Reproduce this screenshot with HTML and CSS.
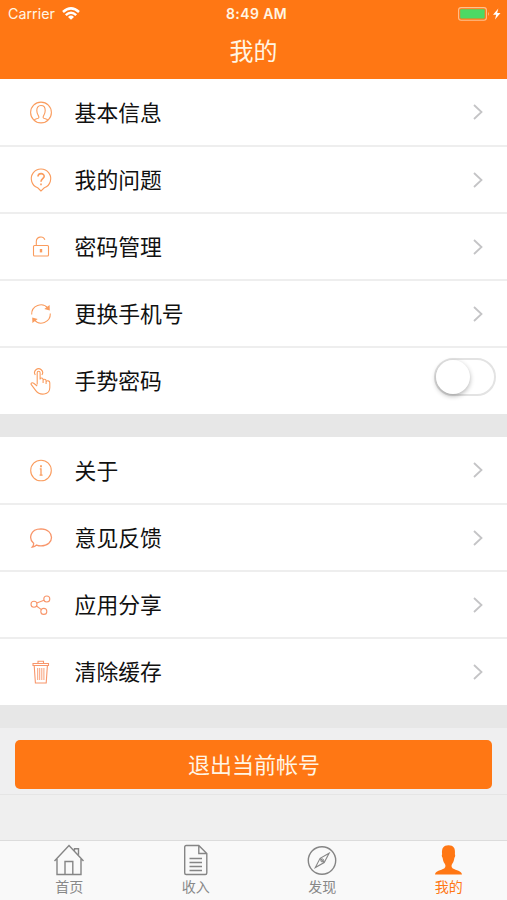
FILE: index.html
```
<!DOCTYPE html>
<html lang="zh">
<head>
  <meta charset="UTF-8">
  <title>我的</title>
  <link rel="stylesheet" href="styles.css">
</head>
<body>
  <header class="header">
    <div class="status">
      <div class="status-left">
        <span>Carrier</span>
        <svg width="18" height="13" viewBox="0 0 18 13" fill="none" stroke="#fff" stroke-width="2.5">
          <path d="M1 5Q9-2.3 17 5M3.8 8.2Q9 3.4 14.2 8.2"/>
          <path d="M6 9.9Q9 7.2 12 9.9L9 12.8z" fill="#fff" stroke="none"/>
        </svg>
      </div>
      <div class="status-time">8:49 AM</div>
      <div class="status-right">
        <svg width="43" height="14" viewBox="0 0 43 14">
          <rect x=".6" y=".6" width="27.8" height="12.6" rx="2.5" fill="none" stroke="#ffc18e" stroke-width="1.1"/>
          <rect x="2.2" y="2.2" width="24.5" height="9.4" rx="1" fill="#4cd964"/>
          <path d="M30 4.8q1.8 2.1 0 4.2z" fill="#ffc18e"/>
          <path d="M40.3 1.5L35 7.8h3.2L37 12.5l5.5-6.6h-3.3z" fill="#fff"/>
        </svg>
      </div>
    </div>
    <h1 class="title">我的</h1>
  </header>

  <ul class="group">
    <li class="row">
      <svg class="icon" viewBox="0 0 24 24">
        <circle cx="12" cy="12.5" r="10.4"/>
        <path d="M5.2 20.2c.7-1.4 4.7-1.4 4.7-2.8 0-1.8-2.1-3-2.1-7 0-3 1.4-4.9 4.2-4.9s4.2 1.9 4.2 4.9c0 4-2.1 5.2-2.1 7 0 1.4 4 1.4 4.7 2.8"/>
      </svg>
      <span class="label">基本信息</span>
      <svg class="arrow" viewBox="0 0 10 16"><path d="M1 1l7.5 7L1 15"/></svg>
    </li>
    <li class="row">
      <svg class="icon" viewBox="0 0 24 24">
        <path d="M12 23l-3.3-3.2A9.7 9.7 0 1 1 15.3 19.8z"/>
        <path d="M9 8.6c0-4 6.2-3.9 6.2-.3 0 2.4-3.2 2.5-3.2 5.4M12 15.5v1.8" stroke-width="1.6"/>
      </svg>
      <span class="label">我的问题</span>
      <svg class="arrow" viewBox="0 0 10 16"><path d="M1 1l7.5 7L1 15"/></svg>
    </li>
    <li class="row">
      <svg class="icon" viewBox="0 0 24 24">
        <rect x="4.5" y="10.5" width="15" height="10.5" rx="1"/>
        <path d="M7.3 10.5V6.5a4.5 4.5 0 0 1 8.6-1.8"/>
        <path d="M12 14v3.4" stroke-width="2.4"/>
      </svg>
      <span class="label">密码管理</span>
      <svg class="arrow" viewBox="0 0 10 16"><path d="M1 1l7.5 7L1 15"/></svg>
    </li>
    <li class="row">
      <svg class="icon" viewBox="0 0 24 24">
        <path d="M2.7 12.5A9.2 9.2 0 0 1 19 6.3M21.3 11.5A9.2 9.2 0 0 1 5 17.7"/>
        <path class="solid" d="M20.6 3l.2 5.5-5.5-1.4zM3.4 21l-.2-5.5 5.5 1.4z"/>
      </svg>
      <span class="label">更换手机号</span>
      <svg class="arrow" viewBox="0 0 10 16"><path d="M1 1l7.5 7L1 15"/></svg>
    </li>
    <li class="row">
      <svg class="icon icon-hand" viewBox="0 0 24 28">
        <path d="M6.3 8a4 4 0 1 1 6.6 0"/>
        <path d="M8.2 17.5V5.7c0-2 2.9-2 2.9 0v6.8c0-2 3-2 3 .2v1c0-2 3-2 3 .2v1c.7-1.7 3.7-1.4 3.7.8v4.7c0 8.2-10.3 8.1-13.8 3.5L2.3 17.7c-.9-1.4.8-2.5 2.4-1.5l3.5 2.8M14.1 13v3M17.1 14v3"/>
      </svg>
      <span class="label">手势密码</span>
      <span class="switch"><span class="knob"></span></span>
    </li>
  </ul>

  <ul class="group">
    <li class="row">
      <svg class="icon" viewBox="0 0 24 24">
        <circle cx="12" cy="12.5" r="10.3"/>
        <path d="M12 7.2v2" stroke-width="1.8"/>
        <path d="M10.8 10.8H12v6.2M10.6 17.2h3" stroke-width="1.3"/>
      </svg>
      <span class="label">关于</span>
      <svg class="arrow" viewBox="0 0 10 16"><path d="M1 1l7.5 7L1 15"/></svg>
    </li>
    <li class="row">
      <svg class="icon icon-red" viewBox="0 0 24 24">
        <path d="M4.600 17.200C-.5 13 .8 3 12 2.900c14 .2 14 16.900 0 17-1.600 0-3.100-.3-4.400-.8-1 .9-2.500 1.700-4.300 1.900 1-1.100 1.500-2.500 1.300-3.800z" stroke-width="1.3"/>
      </svg>
      <span class="label">意见反馈</span>
      <svg class="arrow" viewBox="0 0 10 16"><path d="M1 1l7.5 7L1 15"/></svg>
    </li>
    <li class="row">
      <svg class="icon icon-red" viewBox="0 0 24 24">
        <circle cx="17.8" cy="6" r="3"/>
        <circle cx="5" cy="11.3" r="3"/>
        <circle cx="14.8" cy="18.4" r="3"/>
        <path d="M7.8 10.1l7.2-2.9M7.5 13l4.9 3.6"/>
      </svg>
      <span class="label">应用分享</span>
      <svg class="arrow" viewBox="0 0 10 16"><path d="M1 1l7.5 7L1 15"/></svg>
    </li>
    <li class="row">
      <svg class="icon icon-red" viewBox="0 0 24 24">
        <path d="M4 3.5h15.5v2H4zM9 3.5V1.3h5.5v2.2M5.2 5.5l1.2 17.5h10.8l1.2-17.5"/>
        <path d="M8.7 8v12M10.7 8v12M12.8 8v12M14.9 8v12" stroke-width=".9"/>
      </svg>
      <span class="label">清除缓存</span>
      <svg class="arrow" viewBox="0 0 10 16"><path d="M1 1l7.5 7L1 15"/></svg>
    </li>
  </ul>

  <div class="logout">
    <button class="logout-btn">退出当前帐号</button>
  </div>

  <nav class="tabs">
    <a class="tab">
      <svg class="tab-icon" viewBox="0 0 32 32">
        <path d="M1.5 17L16 1.5 30.500 17M4 15v15.5h24V15M12 30.5V17.5h7.8v13M21.5 6.5V4.7h4v6"/>
      </svg>
      <span>首页</span>
    </a>
    <a class="tab">
      <svg class="tab-icon" viewBox="0 0 32 32">
        <path d="M6.2 1.500h12.600l8 8V29q0 1.500-1.500 1.500H6.200Q4.700 30.500 4.700 29V3q0-1.500 1.500-1.500M18.800 1.500v8h8M9.500 14.500H22M9.500 18.500H22M9.500 22.500H22M9.500 26.500H22"/>
      </svg>
      <span>收入</span>
    </a>
    <a class="tab">
      <svg class="tab-icon" viewBox="0 0 32 32">
        <circle cx="16" cy="16.5" r="13.7"/>
        <path d="M23.1 9.2l-4.900 9.300-8.900 5.100 4.800-9.300zM14.100 14.300l4.100 4.200" stroke-width="1.1"/>
        <circle cx="16.2" cy="16.4" r="1.5" stroke-width="1"/>
      </svg>
      <span>发现</span>
    </a>
    <a class="tab tab-active">
      <svg class="tab-icon" viewBox="0 0 32 32">
        <path d="M2 30.600c.3-3.800 6-4.300 9.200-6.100 1.800-1.100 1.500-3.500.4-4.900-1.300-1.700-1.700-3.700-2-5.800-.9-1-1-2.600-.5-3.600C8.500 4 10.500 1.300 15.500 1.300S22.500 4 21.900 10.200c.5 1 .4 2.600-.5 3.600-.3 2.100-.7 4.100-2 5.800-1.100 1.400-1.400 3.800.4 4.900 3.200 1.800 8.900 2.300 9.200 6.100z"/>
      </svg>
      <span>我的</span>
    </a>
  </nav>
</body>
</html>
```
FILE: styles.css
```
* {
  box-sizing: border-box;
}
body {
  margin: 0;
  height: 900px;
  display: flex;
  flex-direction: column;
  background: #e7e7e7;
  font-family: "Noto Sans CJK SC", sans-serif;
  overflow: hidden;
}
.header {
  height: 79px;
  background: #ff7714;
  color: #fff5e4;
}
.status {
  height: 27px;
  padding: 0 6px 0 8px;
  display: flex;
  align-items: center;
  font: 14.3px Inter, sans-serif;
}
.status-left, .status-right {
  flex: 1;
  display: flex;
  align-items: center;
  gap: 7px;
}
.status-right {
  justify-content: flex-end;
}
.status-time {
  padding-left: 4px;
  font-size: 14px;
  font-weight: 600;
  letter-spacing: 0.4px;
}
.title {
  margin: 0;
  font-size: 24px;
  font-weight: 400;
  line-height: 46px;
  text-align: center;
}
.group {
  list-style: none;
  margin: 0 0 23px;
  padding: 0;
  background: #fff;
}
.row {
  height: 67px;
  padding: 0 24px 0 29px;
  display: flex;
  align-items: center;
  border-bottom: 2px solid #eee;
}
.row:first-child {
  height: 68px;
}
.row:last-child {
  height: 66px;
  border-bottom: none;
}
.icon {
  width: 24px;
  height: 24px;
  fill: none;
  stroke: #fa9c5e;
  stroke-width: 1.1;
}
.icon-hand {
  height: 28px;
}
.icon-red {
  stroke: #f8966b;
}
.icon .solid {
  fill: #fa9c5e;
  stroke: none;
}
.label {
  flex: 1;
  margin-left: 21.6px;
  padding-bottom: 1px;
  font-size: 21.8px;
  line-height: 32px;
  color: #111;
}
.row:first-child .label {
  padding-bottom: 0;
}
.row:last-child .label {
  padding-bottom: 2px;
}
.arrow {
  width: 10px;
  height: 16px;
  fill: none;
  stroke: #c4c4c6;
  stroke-width: 1.8;
}
.switch {
  width: 62px;
  height: 38px;
  margin: -8px -13px 0 0;
  border: 2px solid #e3e3e3;
  border-radius: 19px;
}
.knob {
  display: block;
  width: 34px;
  height: 34px;
  border-radius: 50%;
  background: #fff;
  box-shadow: 0 2px 5px rgba(0, 0, 0, 0.3);
}
.logout {
  height: 67px;
  padding: 12px 15px 0;
  background: #efeff0;
  border-bottom: 1px solid #e5e5e5;
}
.logout-btn {
  display: block;
  width: 100%;
  height: 49px;
  padding: 0 0 4px 1px;
  border: none;
  border-radius: 5px;
  background: #ff7714;
  color: #fff5e4;
  font-family: inherit;
  font-size: 22px;
}
.tabs {
  flex: 1;
  margin-top: 45px;
  padding: 3px 0 0 6px;
  display: flex;
  background: #f9f9f9;
  border-top: 1px solid #dcdcdc;
  box-shadow: 0 -45px #efefef;
}
.tab {
  flex: none;
  width: 126.5px;
  display: flex;
  flex-direction: column;
  align-items: center;
  font-size: 14px;
  line-height: 20px;
  color: #888;
}
.tab-icon {
  width: 32px;
  height: 32px;
  fill: none;
  stroke: #858585;
  stroke-width: 1.4;
}
.tab-active {
  color: #ff7714;
}
.tab-active .tab-icon {
  fill: #ff7714;
  stroke: none;
}
```
